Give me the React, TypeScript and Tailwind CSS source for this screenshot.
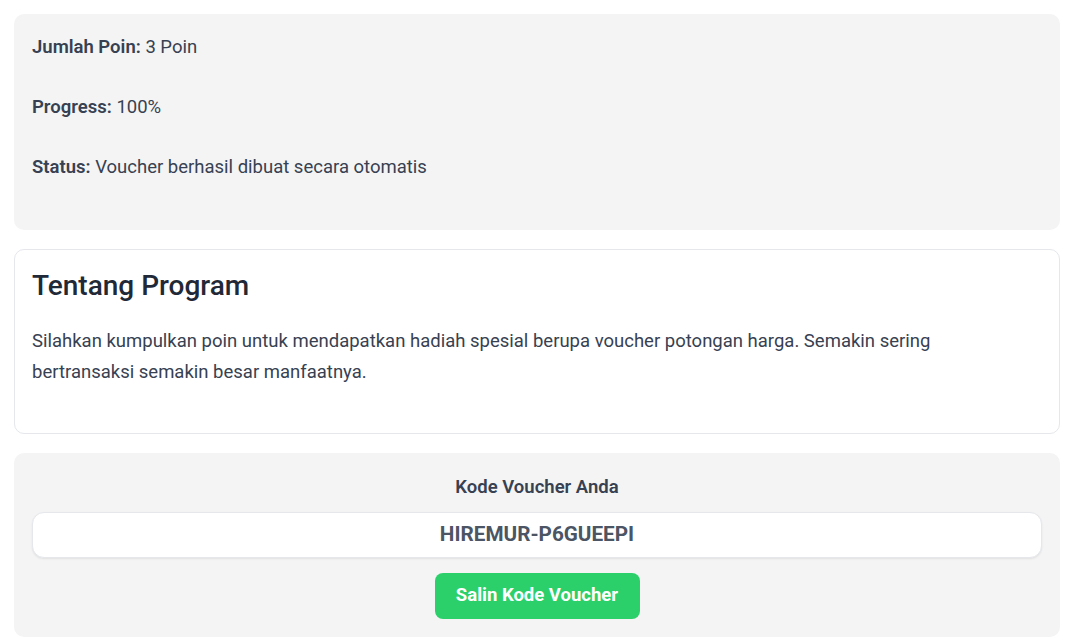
export default function App() {
  const stats = [
    { label: "Jumlah Poin:", value: "3 Poin" },
    { label: "Progress:", value: "100%" },
    { label: "Status:", value: "Voucher berhasil dibuat secara otomatis" },
  ]

  return (
    <main className="min-h-screen bg-white pl-[14px] pr-[20px] py-[14px] font-['Roboto',sans-serif] text-[#374151]">
      <div className="flex flex-col gap-[19px]">
        {/* Ringkasan poin */}
        <section className="rounded-[10px] bg-[#f4f4f5] px-[18px] pb-[49px] pt-[19px]">
          <div className="flex flex-col gap-[32px]">
            {stats.map((s) => (
              <p key={s.label} className="text-[18.5px] leading-[28px]">
                <span className="font-semibold">{s.label}</span> {s.value}
              </p>
            ))}
          </div>
        </section>

        {/* Tentang program */}
        <section className="rounded-[10px] border border-[#e5e7eb] bg-white px-[17px] pb-[45px] pt-[19px]">
          <h2 className="text-[28px] font-medium leading-[34px] text-[#1f2937]">Tentang Program</h2>
          <p className="mt-[23px] pr-[60px] text-[18.5px] leading-[31px]">
            Silahkan kumpulkan poin untuk mendapatkan hadiah spesial berupa voucher potongan harga. Semakin sering
            bertransaksi semakin besar manfaatnya.
          </p>
        </section>

        {/* Kode voucher */}
        <section className="flex flex-col items-center rounded-[10px] bg-[#f4f4f5] px-[18px] pb-[18px] pt-[20px]">
          <h3 className="text-[18.5px] font-semibold leading-[28px]">Kode Voucher Anda</h3>
          <div className="mt-[11px] flex h-[46px] w-full items-center justify-center rounded-[12px] border border-[#e5e7eb] bg-white shadow-[0_1px_2px_rgba(0,0,0,0.08)]">
            <span className="text-[20.7px] font-bold text-[#4b5563]">HIREMUR-P6GUEEPI</span>
          </div>
          <button className="mt-[15px] h-[46px] w-[205px] rounded-[8px] bg-[#2bd06b] text-[18.5px] font-bold text-white">
            Salin Kode Voucher
          </button>
        </section>
      </div>
    </main>
  )
}
